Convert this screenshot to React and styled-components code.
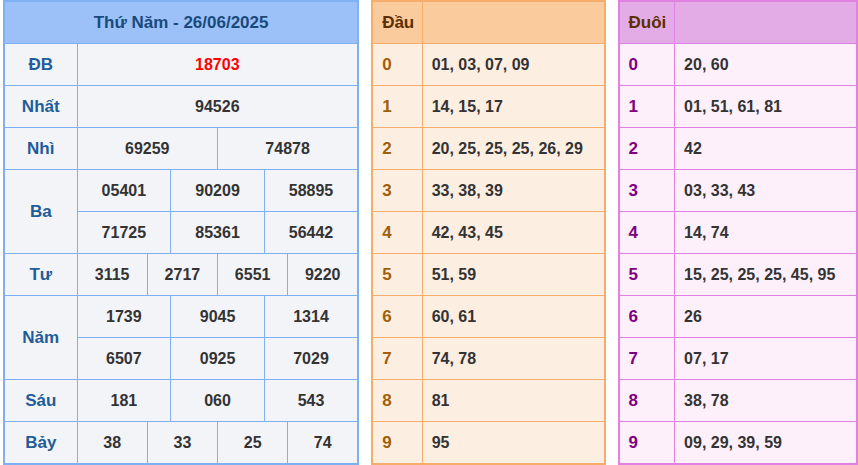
import React from "react";
import styled, { createGlobalStyle } from "styled-components";

const G = createGlobalStyle`
  body { margin: 0; font-family: "Liberation Sans", Arial, sans-serif; }
`;
const Wrap = styled.div`
  display: flex; align-items: flex-start; padding: 0 0 0 3px; gap: 12px;
`;
const Table = styled.table`
  border-collapse: collapse; table-layout: fixed; width: ${p => p.w}px;
  border: 2px solid ${p => p.bc};
  font-weight: bold; font-size: 16px; color: #333;
  td, th { border: 1px solid ${p => p.bc}; height: 41px; padding: 0; }
  th { background: ${p => p.hb}; }
  td { background: ${p => p.bb}; }
`;
const Th = styled.th`
  color: ${p => p.c}; font-size: 17px; text-align: ${p => p.a || "center"};
  padding-left: ${p => p.pl || 0}px !important;
`;
const Label = styled.td`
  color: ${p => p.c}; text-align: ${p => p.a || "center"}; font-size: 17px;
  padding-left: ${p => p.pl || 0}px !important;
`;
const Num = styled.td`
  text-align: ${p => p.a || "center"}; color: ${p => p.red ? "#f00" : "#333"};
  padding-left: ${p => p.pl || 0}px !important;
`;

const blue = { bc: "#7eb1f1", hb: "#9bc1f8", bb: "#f3f4f8" };
const rows = [
  ["ĐB", [["18703"]], true],
  ["Nhất", [["94526"]]],
  ["Nhì", [["69259", "74878"]]],
  ["Ba", [["05401", "90209", "58895"], ["71725", "85361", "56442"]]],
  ["Tư", [["3115", "2717", "6551", "9220"]]],
  ["Năm", [["1739", "9045", "1314"], ["6507", "0925", "7029"]]],
  ["Sáu", [["181", "060", "543"]]],
  ["Bảy", [["38", "33", "25", "74"]]],
];
const dau = ["01, 03, 07, 09", "14, 15, 17", "20, 25, 25, 25, 26, 29", "33, 38, 39", "42, 43, 45", "51, 59", "60, 61", "74, 78", "81", "95"];
const duoi = ["20, 60", "01, 51, 61, 81", "42", "03, 33, 43", "14, 74", "15, 25, 25, 25, 45, 95", "26", "07, 17", "38, 78", "09, 29, 39, 59"];

function Side({ title, data, w, first, bc, hb, bb, tc, dc }) {
  return (
    <Table w={w} bc={bc} hb={hb} bb={bb}>
      <colgroup><col style={{ width: first }} /><col /></colgroup>
      <thead><tr><Th c={tc} a="left" pl={9}>{title}</Th><Th /></tr></thead>
      <tbody>
        {data.map((d, i) => (
          <tr key={i}><Label c={dc} a="left" pl={9}>{i}</Label><Num a="left" pl={9}>{d}</Num></tr>
        ))}
      </tbody>
    </Table>
  );
}

export default function App() {
  return (
    <Wrap>
      <G />
      <Table w={357} {...blue}>
        <colgroup><col style={{ width: 73 }} />{Array.from({ length: 12 }).map((_, i) => <col key={i} />)}</colgroup>
        <thead><tr><Th colSpan={13} c="#1a4a7c">Thứ Năm - 26/06/2025</Th></tr></thead>
        <tbody>
          {rows.flatMap(([l, subs, red]) =>
            subs.map((nums, si) => (
              <tr key={l + si}>
                {si === 0 && <Label rowSpan={subs.length} c="#1f5c99">{l}</Label>}
                {nums.map((n, k) => <Num key={k} colSpan={12 / nums.length} red={red}>{n}</Num>)}
              </tr>
            ))
          )}
        </tbody>
      </Table>
      <Side title="Đầu" data={dau} w={235} first={50} bc="#f6ad6c" hb="#f9cb9d" bb="#fdeee2" tc="#5c2e00" dc="#a05f0a" />
      <Side title="Đuôi" data={duoi} w={241} first={56} bc="#e181e1" hb="#e4acE7" bb="#fdf0fb" tc="#5c2e00" dc="#800080" />
    </Wrap>
  );
}
